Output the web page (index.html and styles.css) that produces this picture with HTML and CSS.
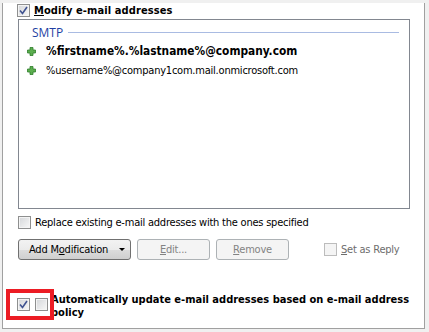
FILE: index.html
```html
<!DOCTYPE html>
<html lang="en">
<head>
  <meta charset="UTF-8">
  <title>E-mail addresses</title>
  <link rel="stylesheet" href="styles.css">
</head>
<body>

  <div class="panel">
    <div class="check-row head-row">
      <span class="cb checked"><svg viewBox="0 0 11 11"><path d="M2 5.5 L4.5 8.5 L9 2"/></svg></span>
      <span class="bold"><u>M</u>odify e-mail addresses</span>
    </div>

    <div class="addr-box">
      <div class="group-head">
        <span class="group-title">SMTP</span>
        <span class="group-rule"></span>
      </div>
      <ul class="addr-list">
        <li class="primary">
          <svg class="plus" viewBox="0 0 9 9"><path d="M3 0.5h3v2.5h2.5v3h-2.5v2.5h-3v-2.5h-2.5v-3h2.5z"/></svg>
          <span>%firstname%.%lastname%@company.com</span>
        </li>
        <li>
          <svg class="plus" viewBox="0 0 9 9"><path d="M3 0.5h3v2.5h2.5v3h-2.5v2.5h-3v-2.5h-2.5v-3h2.5z"/></svg>
          <span>%username%@company1com.mail.onmicrosoft.com</span>
        </li>
      </ul>
    </div>

    <div class="check-row replace-row">
      <span class="cb"></span>
      <span>Replace existing e-mail addresses with the ones specified</span>
    </div>

    <div class="btn-row">
      <button class="btn btn-drop">Add M<u>o</u>dification <span class="caret"></span></button>
      <button class="btn btn-small" disabled><u>E</u>dit...</button>
      <button class="btn btn-small" disabled><u>R</u>emove</button>
      <span class="check-row reply-row">
        <span class="cb off"></span>
        <span><u>S</u>et as Reply</span>
      </span>
    </div>

    <div class="check-row auto-row">
      <span class="cb checked"><svg viewBox="0 0 11 11"><path d="M2 5.5 L4.5 8.5 L9 2"/></svg></span>
      <span class="cb"></span>
      <span class="bold auto-text">Automatically update e-mail addresses based on e-mail address policy</span>
      <div class="highlight"></div>
    </div>
  </div>

</body>
</html>
```

FILE: styles.css
```css
body {
  margin: 0;
  background: #f0f0f0;
  font-family: "DejaVu Sans Condensed", "DejaVu Sans", sans-serif;
  font-size: 11px;
  letter-spacing: -0.22px;
  color: #000;
}

.panel {
  position: relative;
  width: 421px;
  height: 325px;
  margin: -1px 0 0 2px;
  background: #fff;
  border: 1px solid #a0a0a0;
  border-top: none;
}

.bold {
  font-weight: bold;
  letter-spacing: 0;
}

.check-row {
  display: flex;
  align-items: center;
  gap: 4px;
}

.cb {
  display: inline-block;
  box-sizing: border-box;
  width: 13px;
  height: 13px;
  border: 1px solid #8e8f8f;
  background: linear-gradient(135deg, #d4d6d9, #f8f8f8);
  box-shadow: inset 0 0 0 1px #f4f4f4;
  flex: none;
}

.cb svg {
  display: block;
  width: 11px;
  height: 11px;
}

.cb svg path {
  fill: none;
  stroke: #3f5290;
  stroke-width: 1.6;
}

.cb.off {
  border-color: #bcbcbc;
  background: #f4f4f4;
  box-shadow: none;
}

.head-row {
  margin: 4px 0 0 14px;
  height: 14px;
}

.head-row .bold {
  letter-spacing: 0.1px;
}

.addr-box {
  box-sizing: border-box;
  width: 392px;
  height: 190px;
  margin: 2px 0 0 15px;
  border: 1px solid #828790;
}

.group-head {
  display: flex;
  align-items: center;
  gap: 5px;
  padding: 4px 10px 0 13px;
}

.group-title {
  font-family: "Open Sans", sans-serif;
  font-size: 12px;
  letter-spacing: 0;
  color: #1f3fa3;
}

.group-rule {
  flex: 1;
  height: 1px;
  background: #a9bbe2;
}

.addr-list {
  list-style: none;
  margin: 0;
  padding: 0 0 0 8px;
}

.addr-list li {
  display: flex;
  align-items: center;
  gap: 10px;
  height: 19px;
}

.addr-list li.primary {
  height: 20px;
  font-weight: bold;
  font-size: 11.8px;
  letter-spacing: 0;
}

.plus {
  width: 9px;
  height: 9px;
  flex: none;
}

.plus path {
  fill: #5cae4f;
  stroke: #2f7d2b;
  stroke-width: 0.8;
}

.replace-row {
  margin: 6px 0 0 15px;
  height: 14px;
}

.btn-row {
  display: flex;
  align-items: center;
  gap: 6px;
  margin: 10px 0 0 15px;
}

.btn {
  box-sizing: border-box;
  height: 21px;
  padding: 0;
  border: 1px solid #707070;
  border-radius: 3px;
  background: linear-gradient(#f2f2f2, #ebebeb 50%, #dddddd 50%, #cfcfcf);
  font-family: inherit;
  font-size: 11px;
  letter-spacing: -0.22px;
  color: #000;
}

.btn-drop {
  width: 113px;
  display: flex;
  align-items: center;
  padding-left: 10px;
}

.caret {
  margin-left: auto;
  margin-right: 5px;
  border-left: 3px solid transparent;
  border-right: 3px solid transparent;
  border-top: 3px solid #000;
}

.btn-small {
  width: 73px;
}

.btn[disabled] {
  border-color: #adb2b5;
  background: #f4f4f4;
  color: #838383;
}

.reply-row {
  margin-left: 29px;
  color: #6d6d6d;
}

.auto-row {
  position: relative;
  align-items: flex-start;
  gap: 5px;
  margin: 33px 0 0 14px;
}

.auto-row .cb {
  margin-top: 5px;
}

.auto-text {
  width: 372px;
  margin-left: -2px;
  line-height: 13px;
}

.highlight {
  position: absolute;
  left: -11px;
  top: -4px;
  width: 40px;
  height: 23px;
  border: 4px solid #ec1c24;
}
```
